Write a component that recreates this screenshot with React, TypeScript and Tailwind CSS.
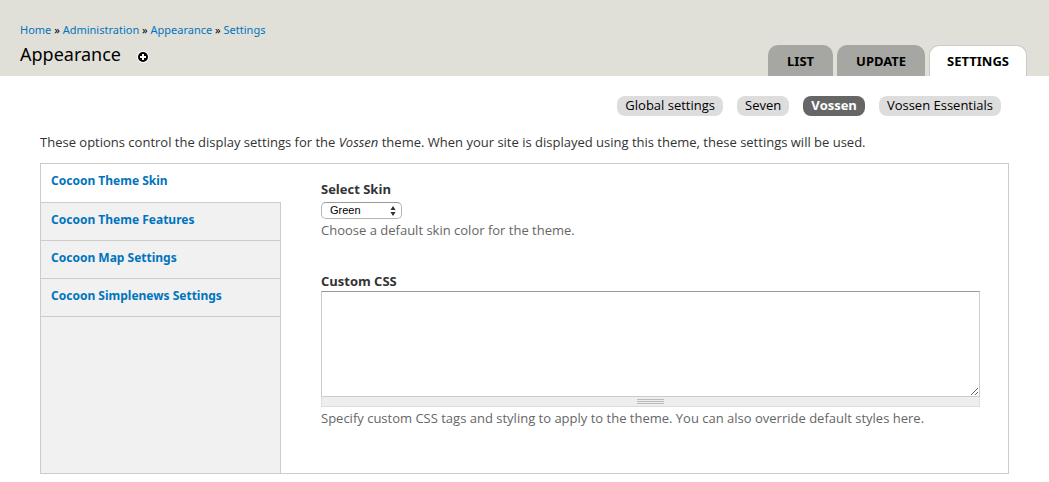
import { useState } from "react";

const crumbs = ["Home", "Administration", "Appearance", "Settings"];
const primaryTabs = ["List", "Update", "Settings"];
const secondaryTabs = ["Global settings", "Seven", "Vossen", "Vossen Essentials"];
const panels = [
  "Cocoon Theme Skin",
  "Cocoon Theme Features",
  "Cocoon Map Settings",
  "Cocoon Simplenews Settings",
];

function AddShortcut() {
  return (
    <a href="#shortcut" aria-label="Add to shortcuts" className="mt-[6px] block">
      <svg width="12" height="12" viewBox="0 0 12 12" aria-hidden="true">
        <circle cx="6" cy="6" r="6" fill="#fff" />
        <circle cx="6" cy="6" r="5" fill="#000" />
        <path d="M5 3h2v2h2v2H7v2H5V7H3V5h2z" fill="#fff" />
      </svg>
    </a>
  );
}

function Header() {
  return (
    <header className="flex h-[76px] items-end justify-between bg-[#e0e0d8] pr-[22px] pl-5 font-['Noto_Sans',sans-serif]">
      <div className="pb-2">
        <nav aria-label="Breadcrumb" className="text-[11px] leading-5">
          {crumbs.map((crumb, i) => (
            <span key={crumb}>
              {i > 0 && " » "}
              <a href="#crumb" className="text-[#0074bd]">
                {crumb}
              </a>
            </span>
          ))}
        </nav>
        <div className="flex items-center gap-4">
          <h1 className="text-[18px] leading-7">Appearance</h1>
          <AddShortcut />
        </div>
      </div>
      <nav aria-label="Primary tabs" className="flex gap-1">
        {primaryTabs.map((tab) => (
          <a
            key={tab}
            href="#tab"
            className={
              tab === "Settings"
                ? "h-[31px] rounded-t-[10px] border border-b-0 border-[#c9cac4] bg-white px-[17px] text-[13px] leading-[30px] font-bold uppercase"
                : "h-[31px] rounded-t-[10px] bg-[#a6a7a2] px-[19px] pt-px text-[13px] leading-[30px] font-bold uppercase"
            }
          >
            {tab}
          </a>
        ))}
      </nav>
    </header>
  );
}

function SkinPanel() {
  const [skin, setSkin] = useState("Green");
  const [css, setCss] = useState("");
  return (
    <div className="min-w-0 flex-1 pt-[15px] pr-7 pb-[45px] pl-10 text-[#666]">
      <label htmlFor="skin" className="block leading-5 font-bold text-[#333]">
        Select Skin
      </label>
      <div className="relative mt-[3px] h-[17px] w-[81px]">
        <select
          id="skin"
          value={skin}
          onChange={(e) => setSkin(e.target.value)}
          className="block h-[17px] w-full appearance-none rounded-[5px] border border-[#b5b5b5] border-t-[#999] bg-white pl-2 font-['Liberation_Sans',sans-serif] text-[11px] leading-[15px] text-black"
        >
          <option>Green</option>
          <option>Blue</option>
          <option>Red</option>
        </select>
        <svg
          className="pointer-events-none absolute top-1 right-[6px]"
          width="6"
          height="10"
          viewBox="0 0 6 10"
          aria-hidden="true"
        >
          <path d="M3 0l2.600 4H.4zM3 10L.4 6h5.200z" fill="#333" />
        </svg>
      </div>
      <p className="mt-px leading-5">Choose a default skin color for the theme.</p>

      <label htmlFor="css" className="mt-[31px] block leading-5 font-bold text-[#333]">
        Custom CSS
      </label>
      <textarea
        id="css"
        value={css}
        onChange={(e) => setCss(e.target.value)}
        className="block h-[106px] w-full resize-y border border-[#ccc] border-t-[#999] bg-white p-[2px] text-black"
      />
      <div className="flex h-[10px] cursor-s-resize flex-col items-center gap-px border border-t-0 border-[#ddd] bg-[#eee] pt-[2px]">
        <span className="h-px w-[27px] bg-[#bbb]" />
        <span className="h-px w-[27px] bg-[#bbb]" />
        <span className="h-px w-[27px] bg-[#bbb]" />
      </div>
      <p className="mt-px leading-5">
        Specify custom CSS tags and styling to apply to the theme. You can also override default
        styles here.
      </p>
    </div>
  );
}

export default function App() {
  return (
    <div className="min-h-screen bg-white font-['Open_Sans','Noto_Sans',sans-serif] text-[13px] text-black">
      <Header />
      <nav aria-label="Secondary tabs" className="flex justify-end gap-[14px] pt-5 pr-12">
        {secondaryTabs.map((tab) => (
          <a
            key={tab}
            href="#theme"
            className={
              tab === "Vossen"
                ? "rounded-lg bg-[#666] px-2 pb-[2px] leading-[18px] font-bold text-white"
                : "rounded-lg bg-[#ddd] px-2 pb-[2px] leading-[18px]"
            }
          >
            {tab}
          </a>
        ))}
      </nav>
      <main className="px-10 pt-4">
        <p className="leading-5 text-[#333]">
          These options control the display settings for the <em>Vossen</em> theme. When your site
          is displayed using this theme, these settings will be used.
        </p>
        <div className="mt-[11px] flex border border-[#ccc]">
          <ul className="flex w-60 shrink-0 flex-col font-['Noto_Sans',sans-serif] text-[12px]">
            {panels.map((panel, i) => (
              <li
                key={panel}
                className={
                  i === 0
                    ? "border-b border-[#ccc] pb-px"
                    : "border-r border-b border-[#ccc] bg-[#f1f1f1]"
                }
              >
                <a
                  href="#panel"
                  className="block px-[10px] pt-[7px] pb-[10px] leading-5 font-bold text-[#0074bd]"
                >
                  {panel}
                </a>
              </li>
            ))}
            <li aria-hidden="true" className="flex-1 border-r border-[#ccc] bg-[#f1f1f1]" />
          </ul>
          <SkinPanel />
        </div>
      </main>
    </div>
  );
}
